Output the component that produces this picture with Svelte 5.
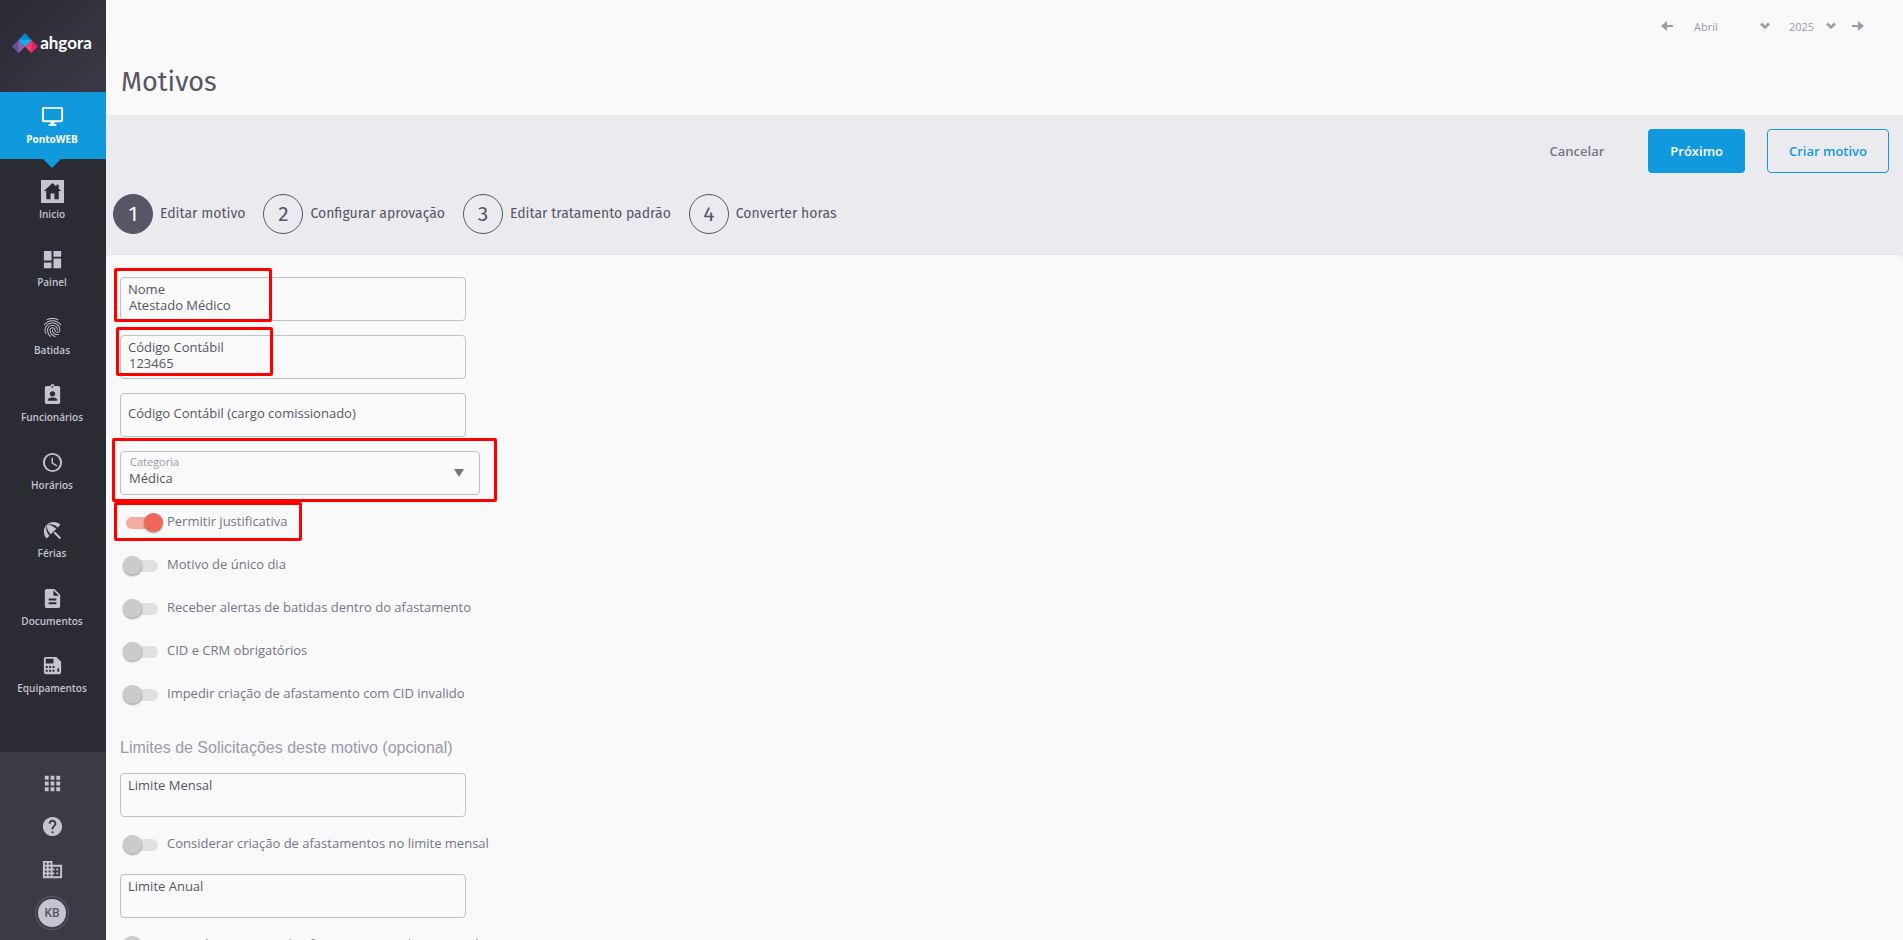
<!-- Motivos editor: sidebar, stepper and the first step of the form. -->
<script lang="ts">
	type Icon = { label: string; path: string };

	const menu: Icon[] = [
		{
			label: 'Inicio',
			path: 'M0 0h24v24H0zM12 3 3 11.500h2.500V20h4.500v-6h4v6h4.500v-8.500H21L18.500 9.200V5h-2.500v1.800z'
		},
		{ label: 'Painel', path: 'M3 13h8V3H3v10zm0 8h8v-6H3v6zm10 0h8V11h-8v10zm0-18v6h8V3h-8z' },
		{
			label: 'Batidas',
			path: 'M17.810 4.470c-.08 0-.16-.02-.23-.06C15.660 3.420 14 3 12.010 3c-1.980 0-3.860.47-5.570 1.410-.24.13-.54.04-.68-.2-.13-.24-.04-.55.2-.68C7.820 2.520 9.860 2 12.010 2c2.130 0 3.990.47 6.030 1.520.25.13.34.43.21.67-.09.18-.26.28-.44.28zM3.500 9.720c-.1 0-.2-.03-.29-.09-.23-.16-.28-.47-.12-.7.99-1.400 2.250-2.500 3.750-3.270C9.980 4.040 14 4.030 17.150 5.650c1.500.77 2.760 1.860 3.750 3.250.16.22.11.54-.12.7-.23.16-.54.11-.7-.12-.9-1.260-2.040-2.250-3.390-2.940-2.870-1.470-6.540-1.470-9.400.01-1.360.7-2.500 1.700-3.400 2.960-.08.14-.23.21-.39.21zm6.250 12.070c-.13 0-.26-.05-.35-.15-.87-.87-1.340-1.430-2.010-2.640-.69-1.230-1.050-2.730-1.050-4.340 0-2.970 2.540-5.390 5.660-5.390s5.660 2.420 5.660 5.390c0 .28-.22.5-.5.5s-.5-.22-.5-.5c0-2.420-2.090-4.390-4.660-4.390-2.570 0-4.660 1.970-4.660 4.390 0 1.440.32 2.770.93 3.850.64 1.150 1.080 1.640 1.850 2.420.19.2.19.51 0 .71-.11.1-.24.15-.37.15zm7.170-1.850c-1.190 0-2.240-.3-3.100-.89-1.490-1.010-2.380-2.650-2.380-4.390 0-.28.22-.5.5-.5s.5.22.5.5c0 1.410.72 2.740 1.940 3.560.71.48 1.540.71 2.540.71.24 0 .64-.03 1.040-.1.27-.05.53.13.58.41.05.27-.13.53-.41.58-.57.11-1.070.12-1.210.12zM14.910 22c-.04 0-.09-.01-.13-.02-1.590-.44-2.630-1.030-3.720-2.100-1.400-1.390-2.170-3.240-2.170-5.220 0-1.620 1.380-2.940 3.080-2.940 1.700 0 3.080 1.320 3.080 2.940 0 1.070.93 1.940 2.080 1.940s2.080-.87 2.080-1.940c0-3.770-3.250-6.830-7.250-6.830-2.840 0-5.440 1.580-6.610 4.030-.39.81-.59 1.760-.59 2.800 0 .78.07 2.010.67 3.610.1.26-.03.55-.29.64-.26.1-.55-.04-.64-.29-.49-1.310-.73-2.610-.73-3.960 0-1.200.23-2.290.68-3.240 1.330-2.790 4.280-4.600 7.510-4.600 4.550 0 8.250 3.510 8.250 7.830 0 1.620-1.380 2.940-3.080 2.940s-3.080-1.320-3.080-2.940c0-1.070-.93-1.940-2.080-1.940s-2.080.87-2.080 1.940c0 1.710.66 3.310 1.870 4.510.95.94 1.860 1.460 3.270 1.850.27.07.42.35.35.61-.05.23-.26.38-.47.38z'
		},
		{
			label: 'Funcionários',
			path: 'M6 3h4a2 2 0 0 1 4 0h4a2 2 0 0 1 2 2v15a2 2 0 0 1-2 2H6a2 2 0 0 1-2-2V5a2 2 0 0 1 2-2zM12 3a1 1 0 1 0 0 2 1 1 0 0 0 0-2zM12 8.500a2.800 2.800 0 1 0 0 5.600 2.800 2.800 0 0 0 0-5.600zM7 18.500h10v-.8c0-1.700-3.300-2.500-5-2.500s-5 .8-5 2.500z'
		},
		{
			label: 'Horários',
			path: 'M12 2a10 10 0 1 0 0 20 10 10 0 0 0 0-20zM12 4a8 8 0 1 1 0 16 8 8 0 0 1 0-16zM11 7h1.500v5.200l4.500 2.700-.8 1.200L11 13z'
		},
		{
			label: 'Férias',
			path: 'M13.127 14.560l1.430-1.430 6.440 6.443L19.570 21zm4.293-5.730l2.860-2.860c-3.950-3.950-10.350-3.960-14.300-.02 3.930-1.300 8.310-.25 11.440 2.880zM5.950 5.980c-3.940 3.950-3.930 10.350.02 14.300l2.860-2.860C5.700 14.290 4.650 9.910 5.950 5.980zm.02-.02l-.01.01c-.38 3.010 1.170 6.880 4.300 10.020l5.730-5.730c-3.130-3.130-7.010-4.680-10.020-4.300z'
		},
		{
			label: 'Documentos',
			path: 'M14 2H6c-1.100 0-2 .9-2 2v16c0 1.100.9 2 2 2h12c1.100 0 2-.9 2-2V8l-6-6zm2 16H8v-2h8v2zm0-4H8v-2h8v2zm-3-5V3.500L18.500 9H13z'
		},
		{
			label: 'Equipamentos',
			path: 'M5 3h11l5 5v11a2 2 0 0 1-2 2H5a2 2 0 0 1-2-2V5a2 2 0 0 1 2-2zM5 5v5h8V5zM5 12.500v2h2v-2zM8.500 12.500v2h2v-2zM12 12.500v2h2v-2zM5 16.500v2h2v-2zM8.500 16.500v2h2v-2zM12 16.500v2h2v-2zM17 15v3.500h2V15z'
		}
	];

	const tools: Icon[] = [
		{
			label: 'Aplicativos',
			path: 'M4 8h4V4H4v4zm6 12h4v-4h-4v4zm-6 0h4v-4H4v4zm0-6h4v-4H4v4zm6 0h4v-4h-4v4zm6-10v4h4V4h-4zm-6 4h4V4h-4v4zm6 6h4v-4h-4v4zm0 6h4v-4h-4v4z'
		},
		{
			label: 'Ajuda',
			path: 'M12 2C6.480 2 2 6.480 2 12s4.480 10 10 10 10-4.480 10-10S17.520 2 12 2zm1 17h-2v-2h2v2zm2.070-7.750l-.9.92C13.450 12.900 13 13.500 13 15h-2v-.5c0-1.100.45-2.100 1.170-2.830l1.240-1.260c.37-.36.59-.86.59-1.410 0-1.100-.9-2-2-2s-2 .9-2 2H8c0-2.210 1.790-4 4-4s4 1.790 4 4c0 .88-.36 1.680-.93 2.250z'
		},
		{
			label: 'Empresa',
			path: 'M12 7V3H2v18h20V7H12zM6 19H4v-2h2v2zm0-4H4v-2h2v2zm0-4H4V9h2v2zm0-4H4V5h2v2zm4 12H8v-2h2v2zm0-4H8v-2h2v2zm0-4H8V9h2v2zm0-4H8V5h2v2zm10 12h-8v-2h2v-2h-2v-2h2v-2h-2V9h8v10zm-2-8h-2v2h2v-2zm0 4h-2v2h2v-2z'
		}
	];

	const steps = ['Editar motivo', 'Configurar aprovação', 'Editar tratamento padrão', 'Converter horas'];
	let step = $state(0);

	let nome = $state('Atestado Médico');
	let codigo = $state('123465');
	let codigoCargo = $state('');
	let categoria = $state('Médica');
	let limiteMensal = $state('');
	let limiteAnual = $state('');

	let options = $state([
		{ label: 'Permitir justificativa', on: true, marked: true },
		{ label: 'Motivo de único dia', on: false, marked: false },
		{ label: 'Receber alertas de batidas dentro do afastamento', on: false, marked: false },
		{ label: 'CID e CRM obrigatórios', on: false, marked: false },
		{ label: 'Impedir criação de afastamento com CID invalido', on: false, marked: false }
	]);
	let mensal = $state(false);
	let anual = $state(false);
</script>

{#snippet icon(path: string)}
	<svg class="icon" viewBox="0 0 24 24" aria-hidden="true"><path fill-rule="evenodd" d={path} /></svg>
{/snippet}

{#snippet chevron()}
	<svg class="chevron" viewBox="0 0 10 8" aria-hidden="true"><path d="M1 1.500 5 5.500 9 1.500" /></svg>
{/snippet}

<div class="shell">
	<aside>
		<a class="logo" href="#home">
			<svg viewBox="0 0 26 20" aria-hidden="true">
				<path fill="#6b4fa0" d="M6.500 7 0 13.500 6.500 20 13 13.500z" />
				<path fill="#8a63ae" d="M6.500 7 13 13.500 6.500 20z" />
				<path fill="#e0245e" d="M19.500 7 13 13.500 19.500 20 26 13.500z" />
				<path fill="#f23d6d" d="M13 13.500 19.500 7v13z" />
				<path fill="#0a86d8" d="M13 0 6.500 7 13 13.500 19.500 7z" />
				<path fill="#12b0f2" d="M6.500 7h13L13 13.500z" />
			</svg>
			<span>ahgora</span>
		</a>
		<nav>
			<a class="item active" href="#ponto">
				{@render icon('M21 2H3c-1.100 0-2 .9-2 2v12c0 1.100.9 2 2 2h7v2H8v2h8v-2h-2v-2h7c1.100 0 2-.9 2-2V4c0-1.100-.9-2-2-2zm0 14H3V4h18v12z')}
				<span>PontoWEB</span>
			</a>
			{#each menu as item}
				<a class="item" href="#{item.label}">
					{@render icon(item.path)}
					<span>{item.label}</span>
				</a>
			{/each}
		</nav>
		<div class="tools">
			{#each tools as tool}
				<button type="button" aria-label={tool.label}>{@render icon(tool.path)}</button>
			{/each}
			<button type="button"><span class="avatar">KB</span></button>
		</div>
	</aside>

	<main>
		<header>
			<div class="period">
				<button type="button" aria-label="Mês anterior">
					<svg class="arrow" viewBox="0 0 12 10" aria-hidden="true"><path d="M6 0v4h6v2H6v4L0 5z" /></svg>
				</button>
				<span class="pick month">
					<select aria-label="Mês"><option>Abril</option></select>
					{@render chevron()}
				</span>
				<span class="pick year">
					<select aria-label="Ano"><option>2025</option></select>
					{@render chevron()}
				</span>
				<button type="button" aria-label="Próximo mês">
					<svg class="arrow" viewBox="0 0 12 10" aria-hidden="true"><path d="M6 0v4H0v2h6v4l6-5z" /></svg>
				</button>
			</div>
			<h1>Motivos</h1>
		</header>

		<section class="bar">
			<div class="actions">
				<button class="btn" type="button">Cancelar</button>
				<button class="btn primary" type="button">Próximo</button>
				<button class="btn outline" type="button">Criar motivo</button>
			</div>
			<ol class="steps">
				{#each steps as name, i}
					<li>
						<button type="button" class:current={step === i} onclick={() => (step = i)}>
							<span class="num">{i + 1}</span>
							<span>{name}</span>
						</button>
					</li>
				{/each}
			</ol>
		</section>

		<form class="card">
			<div class="field">
				<label for="nome">Nome</label>
				<input id="nome" bind:value={nome} />
				<span class="mark mark-nome"></span>
			</div>
			<div class="field">
				<label for="codigo">Código Contábil</label>
				<input id="codigo" bind:value={codigo} />
				<span class="mark mark-codigo"></span>
			</div>
			<div class="field resting">
				<label for="codigo-cargo">Código Contábil (cargo comissionado)</label>
				<input id="codigo-cargo" bind:value={codigoCargo} />
			</div>
			<div class="field category">
				<label for="categoria">Categoria</label>
				<select id="categoria" bind:value={categoria}><option>Médica</option></select>
				<svg class="caret" viewBox="0 0 10 8" aria-hidden="true"><path d="M0 0h10L5 8z" /></svg>
				<span class="mark mark-category"></span>
			</div>

			<div class="options">
				{#each options as option}
					<label class="toggle">
						<input type="checkbox" bind:checked={option.on} />
						<span class="text">{option.label}</span>
						{#if option.marked}<span class="mark mark-toggle"></span>{/if}
					</label>
				{/each}
			</div>

			<h2>Limites de Solicitações deste motivo (opcional)</h2>
			<div class="field">
				<label for="mensal">Limite Mensal</label>
				<input id="mensal" bind:value={limiteMensal} />
			</div>
			<div class="options">
				<label class="toggle">
					<input type="checkbox" bind:checked={mensal} />
					<span class="text">Considerar criação de afastamentos no limite mensal</span>
				</label>
			</div>
			<div class="field">
				<label for="anual">Limite Anual</label>
				<input id="anual" bind:value={limiteAnual} />
			</div>
			<div class="options">
				<label class="toggle">
					<input type="checkbox" bind:checked={anual} />
					<span class="text">Considerar criação de afastamentos no limite anual</span>
				</label>
			</div>
		</form>
	</main>
</div>

<style>
	:global(body) {
		background: #f9f9f9;
	}
	.shell {
		display: flex;
		height: 100vh;
		font-family: 'Open Sans', 'Noto Sans', sans-serif;
		font-size: 13px;
		color: #565666;
	}
	.shell * {
		box-sizing: border-box;
	}
	button,
	input,
	select {
		margin: 0;
		padding: 0;
		border: 0;
		background: none;
		font: inherit;
		color: inherit;
	}
	button {
		cursor: pointer;
	}
	select {
		appearance: none;
	}

	/* sidebar */
	aside {
		display: flex;
		flex: none;
		flex-direction: column;
		width: 106px;
		background: #2b2b33;
		color: #c4c4d0;
	}
	.logo {
		display: flex;
		flex: none;
		align-items: center;
		justify-content: center;
		gap: 2px;
		height: 92px;
		padding: 0 2px 6px 0;
		background: linear-gradient(135deg, #2b2a33, #3b3a46);
		color: #fff;
		font: 700 17px/20px Lato, sans-serif;
		text-decoration: none;
	}
	.logo svg {
		width: 26px;
		height: 20px;
	}
	nav {
		display: flex;
		flex: 1;
		flex-direction: column;
		padding-bottom: 43px;
	}
	.item {
		display: flex;
		flex: 1;
		flex-direction: column;
		align-items: center;
		gap: 4px;
		padding: 13px 2px 0 0;
		font-size: 10px;
		font-weight: 600;
		line-height: 14px;
		color: inherit;
		text-decoration: none;
	}
	.item.active {
		position: relative;
		flex: none;
		height: 67px;
		margin-bottom: 8px;
		background: #1199de;
		color: #fff;
		font-weight: 700;
	}
	.item.active::after {
		content: '';
		position: absolute;
		top: 100%;
		border: 9px solid transparent;
		border-top-color: #1199de;
		border-bottom: 0;
	}
	.icon {
		display: block;
		flex: none;
		width: 23px;
		height: 23px;
		fill: currentColor;
	}
	.tools {
		display: flex;
		flex-direction: column;
		padding: 10px 2px 6px 0;
		background: #3c3b45;
	}
	.tools button {
		display: grid;
		place-items: center;
		height: 43px;
	}
	.avatar {
		display: grid;
		place-items: center;
		width: 28px;
		height: 28px;
		border-radius: 50%;
		background: #c4c4d0;
		box-shadow: 0 0 0 2px #3c3b45, 0 0 0 3px #5c5b6a;
		color: #565666;
		font: 500 12px/28px Roboto, sans-serif;
	}

	/* top */
	main {
		flex: 1;
		min-width: 0;
		overflow-y: auto;
		scrollbar-width: none;
		background: #ebebef;
	}
	header {
		background: #f9f9f9;
		padding: 16px 39px 15px 15px;
	}
	.period {
		display: flex;
		align-items: center;
		justify-content: flex-end;
		height: 20px;
		color: #9a9aab;
		font-size: 11px;
	}
	.arrow {
		display: block;
		width: 12px;
		height: 10px;
		fill: currentColor;
	}
	.pick {
		display: grid;
		align-items: center;
	}
	.pick > :global(*) {
		grid-area: 1 / 1;
	}
	.month {
		width: 76px;
		margin: 0 19px 0 21px;
	}
	.year {
		width: 47px;
		margin-right: 16px;
	}
	.chevron {
		justify-self: end;
		width: 10px;
		height: 8px;
		fill: none;
		stroke: currentColor;
		stroke-width: 2.5;
		pointer-events: none;
	}
	h1 {
		margin: 28px 0 0;
		font: 400 27px/36px 'Fira Sans', 'Noto Sans', sans-serif;
	}
	.bar {
		padding: 14px 14px 21px 7px;
	}
	.actions {
		display: flex;
		justify-content: flex-end;
		gap: 22px;
	}
	.btn {
		height: 44px;
		padding: 0 21px;
		border: 1px solid transparent;
		border-radius: 4px;
		font-weight: 600;
		color: #75758a;
	}
	.primary {
		background: #1199de;
		color: #fff;
	}
	.outline {
		border-color: #1199de;
		color: #1199de;
	}
	.steps {
		display: flex;
		gap: 18px;
		margin: 21px 0 0;
		padding: 0;
		list-style: none;
		font: 400 14px/20px 'Fira Sans', 'Noto Sans', sans-serif;
	}
	.steps button {
		display: flex;
		align-items: center;
		gap: 7px;
	}
	.num {
		display: grid;
		place-items: center;
		width: 40px;
		height: 40px;
		border: 1px solid #565666;
		border-radius: 50%;
		font-size: 21px;
	}
	.current .num {
		background: #565666;
		color: #fff;
	}

	/* form */
	.card {
		padding: 22px 14px 24px;
		border-radius: 4px 4px 0 0;
		background: #f9f9f9;
		box-shadow: 0 0 2px #d4d4dc;
	}
	.field {
		position: relative;
		display: grid;
		width: 346px;
		height: 44px;
		border: 1px solid #c0c0cc;
		border-radius: 4px;
	}
	.field + .field {
		margin-top: 14px;
	}
	.field > label,
	.field > input,
	.field > select {
		grid-area: 1 / 1;
	}
	.field > label {
		z-index: 1;
		align-self: start;
		justify-self: start;
		padding: 3px 7px 0;
		line-height: 16px;
	}
	.resting > label {
		align-self: center;
		padding: 0 7px 4px;
	}
	.field > input,
	.field > select {
		width: 100%;
		padding: 16px 8px 4px;
		border-radius: 4px;
		line-height: 20px;
	}
	.category {
		width: 360px;
	}
	.category > label {
		padding: 2px 9px 0;
		font-size: 11px;
		color: #9a9aab;
	}
	.category > select {
		padding: 12px 8px 2px;
	}
	.caret {
		grid-area: 1 / 1;
		align-self: center;
		justify-self: end;
		width: 10px;
		height: 8px;
		margin-right: 15px;
		fill: #757575;
		pointer-events: none;
	}
	.options {
		padding: 6px 0 8px;
	}
	.toggle {
		position: relative;
		display: flex;
		align-items: center;
		gap: 9px;
		height: 43px;
		padding-left: 6px;
		color: #75758a;
	}
	.toggle .text {
		padding-bottom: 3px;
	}
	.toggle input {
		position: relative;
		flex: none;
		appearance: none;
		width: 32px;
		height: 12px;
		border-radius: 6px;
		background: #e1e1e1;
	}
	.toggle input::before {
		content: '';
		position: absolute;
		top: -4px;
		left: -3px;
		width: 19px;
		height: 19px;
		border-radius: 50%;
		background: #cbcbcb;
		box-shadow: 0 1px 2px #00000066;
	}
	.toggle input:checked {
		background: #f5aaa4;
	}
	.toggle input:checked::before {
		left: 18px;
		background: #ee6759;
	}
	h2 {
		margin: 14px 0 15px;
		font: 400 16px/20px 'Liberation Sans', Arial, sans-serif;
		color: #9a9aab;
	}

	/* highlight frames drawn over the form */
	.mark {
		position: absolute;
		z-index: 2;
		border: 3px solid #f00;
		border-radius: 2px;
		pointer-events: none;
	}
	.mark-nome {
		top: -10px;
		left: -7px;
		width: 158px;
		height: 54px;
	}
	.mark-codigo {
		top: -9px;
		left: -5px;
		width: 157px;
		height: 49px;
	}
	.mark-category {
		top: -14px;
		left: -9px;
		width: 385px;
		height: 64px;
	}
	.mark-toggle {
		top: 1px;
		left: -6px;
		width: 188px;
		height: 39px;
	}
</style>
